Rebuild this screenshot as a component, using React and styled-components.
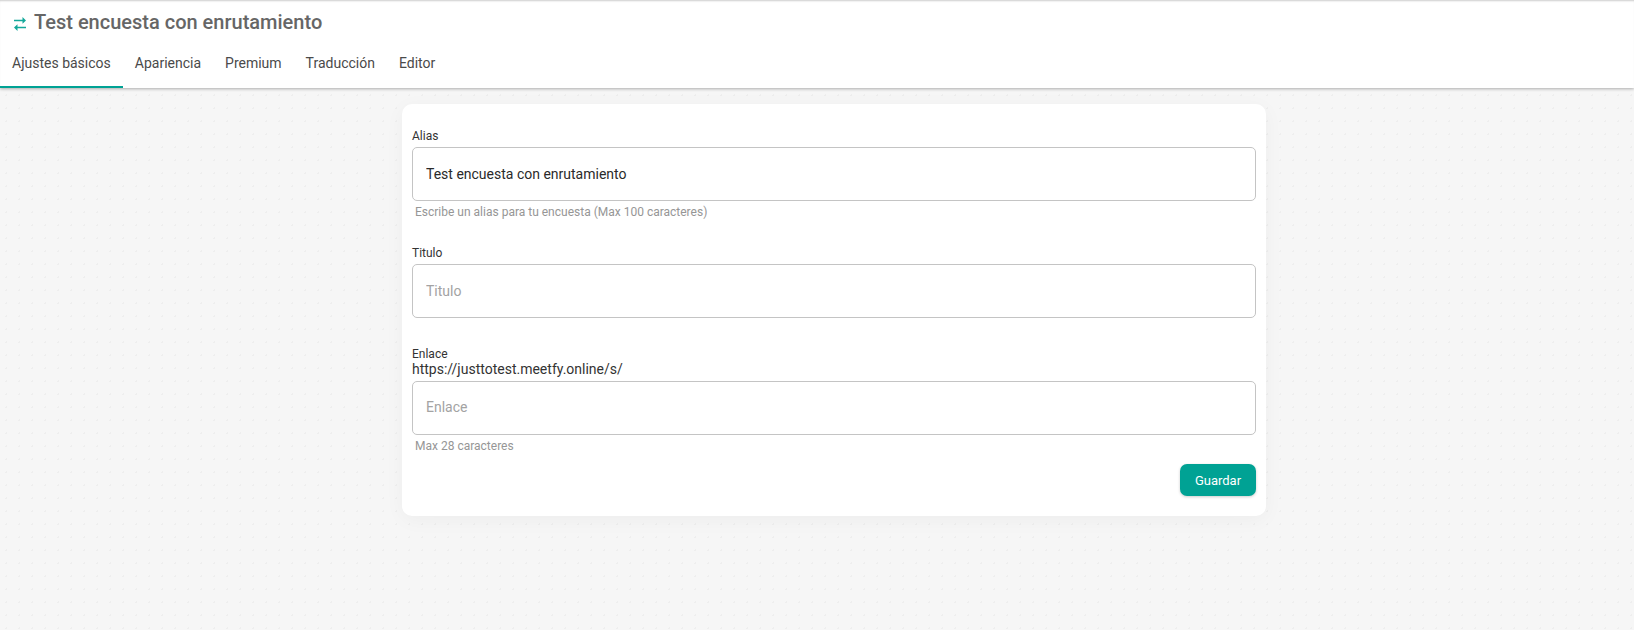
import React from "react";
import styled, { createGlobalStyle } from "styled-components";

const GlobalStyle = createGlobalStyle`
  html, body {
    margin: 0;
    padding: 0;
    height: 100%;
  }
  body {
    font-family: Roboto, "Liberation Sans", sans-serif;
    background-color: #f6f6f6;
    background-image: radial-gradient(#eeeeee 1px, transparent 1px);
    background-size: 13px 13px;
    background-position: 0 -2px;
    color: #212121;
  }
`;

const TABS = ["Ajustes básicos", "Apariencia", "Premium", "Traducción", "Editor"];

const Header = styled.header`
  background: #fff;
  box-shadow: 0 1px 3px rgba(0, 0, 0, 0.3), inset 0 2px 2px -1px rgba(0, 0, 0, 0.2);
  height: 88px;
`;

const TitleRow = styled.div`
  display: flex;
  align-items: center;
  gap: 8px;
  height: 44px;
  padding-left: 14px;
`;

const Title = styled.h1`
  margin: 0;
  font-size: 20px;
  font-weight: 500;
  color: #666666;
`;

const Tabs = styled.nav`
  display: flex;
`;

const Tab = styled.a`
  height: 44px;
  display: flex;
  align-items: center;
  padding: 0 12px 4px;
  font-size: 14px;
  color: #4a4a4a;
  box-sizing: border-box;
  border-bottom: 2px solid ${props => (props.$active ? "#00a294" : "transparent")};
`;

const Page = styled.div`
  display: flex;
  justify-content: center;
  padding: 16px 0 0 34px;
`;

const Card = styled.main`
  width: 864px;
  box-sizing: border-box;
  padding: 24px 10px 20px;
  background: #fff;
  border-radius: 10px;
  box-shadow: 0 4px 20px rgba(0, 0, 0, 0.04);
`;

const Field = styled.div`
  margin-bottom: ${props => props.$gap || 0}px;
`;

const Label = styled.label`
  display: block;
  font-size: 12px;
  line-height: 16px;
  color: #333333;
`;

const Prefix = styled.div`
  font-size: 14px;
  line-height: 14px;
  margin-bottom: 5px;
  color: #333333;
`;

const Input = styled.input`
  display: block;
  width: 100%;
  height: 54px;
  margin-top: 3px;
  box-sizing: border-box;
  padding: 0 13px ${props => props.$bottom || 1}px;
  border: 1px solid #c4c4c4;
  border-radius: 5px;
  background: #fff;
  font-family: inherit;
  font-size: 14px;
  color: #2a2a2a;
  outline: none;

  &::placeholder {
    color: #a3a3a3;
    opacity: 1;
  }
`;

const Hint = styled.div`
  margin: 3px 0 0 3px;
  font-size: 12px;
  line-height: 16px;
  color: #969696;
`;

const Actions = styled.div`
  display: flex;
  justify-content: flex-end;
  margin-top: 10px;
`;

const SaveButton = styled.button`
  width: 76px;
  height: 32px;
  border: none;
  border-radius: 7px;
  background: #00a294;
  box-shadow: 0 1px 3px rgba(0, 0, 0, 0.2);
  color: #fff;
  font-family: inherit;
  font-size: 13px;
  font-weight: 400;
`;

const IconSvg = styled.svg`
  margin-top: 4px;
  flex: none;
`;

const SwapIcon = () => (
  <IconSvg width="12" height="14" viewBox="0 0 12 14" fill="#14a89a">
    <path d="M0 2.7h8.5V0L12 3.4 8.5 6.8V4.3H0z" />
    <path d="M12 9.7H3.5V7.2L0 10.6 3.5 14v-2.7H12z" />
  </IconSvg>
);

export default function App() {
  return (
    <>
      <GlobalStyle />
      <Header>
        <TitleRow>
          <SwapIcon />
          <Title>Test encuesta con enrutamiento</Title>
        </TitleRow>
        <Tabs>
          {TABS.map((tab, i) => (
            <Tab key={tab} $active={i === 0}>{tab}</Tab>
          ))}
        </Tabs>
      </Header>
      <Page>
        <Card>
          <Field $gap={25}>
            <Label>Alias</Label>
            <Input readOnly value="Test encuesta con enrutamiento" />
            <Hint>Escribe un alias para tu encuesta (Max 100 caracteres)</Hint>
          </Field>
          <Field $gap={28}>
            <Label>Titulo</Label>
            <Input readOnly placeholder="Titulo" />
          </Field>
          <Field>
            <Label>Enlace</Label>
            <Prefix>https://justtotest.meetfy.online/s/</Prefix>
            <Input readOnly placeholder="Enlace" $bottom={3} />
            <Hint>Max 28 caracteres</Hint>
          </Field>
          <Actions>
            <SaveButton>Guardar</SaveButton>
          </Actions>
        </Card>
      </Page>
    </>
  );
}
